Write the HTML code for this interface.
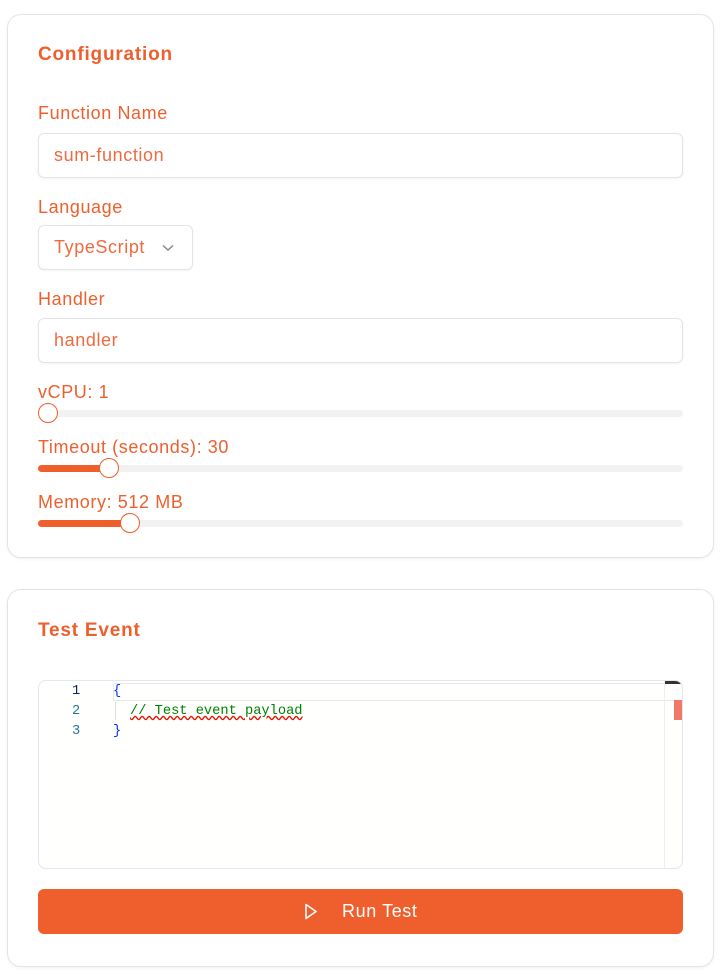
<!DOCTYPE html>
<html><head><style>
body{margin:0;background:#fff;font-family:"Liberation Sans",sans-serif;width:724px;height:976px;position:relative;overflow:hidden;color:#ee5f2d}
.card{position:absolute;left:7px;width:705px;border:1px solid #e3e4ea;border-radius:14px;background:#fff;box-shadow:0 1px 3px rgba(0,0,0,.06)}
.t{position:absolute;left:38px;font-size:18px;letter-spacing:.6px;color:#ee5f2d;white-space:nowrap}
.h{font-weight:bold;font-size:19px;letter-spacing:.8px}
.inp{position:absolute;left:38px;width:643px;height:43px;border:1px solid #e3e4ea;border-radius:6px;box-shadow:0 1px 2px rgba(0,0,0,.05)}
.inp span{position:absolute;left:15px;top:11px;font-size:18px;letter-spacing:.6px;color:#ee6a40}
.track{position:absolute;left:38px;width:645px;height:7px;border-radius:4px;background:#f2f2f2}
.fill{position:absolute;left:0;top:0;height:7px;border-radius:4px;background:#ee5f2d}
.knob{position:absolute;top:-7px;width:18px;height:18px;border:1.5px solid #ee5f2d;border-radius:50%;background:#fff}
.mono{font-family:"Liberation Mono",monospace;font-size:13.7px;position:absolute}
</style></head><body>
<div class="card" style="top:14px;height:542px"></div>
<div class="t h" style="top:44px">Configuration</div>
<div class="t" style="top:103px">Function Name</div>
<div class="inp" style="top:133px"><span>sum-function</span></div>
<div class="t" style="top:197px">Language</div>
<div class="inp" style="top:225px;width:153px"><span>TypeScript</span>
<svg style="position:absolute;left:123px;top:18px" width="12" height="8" viewBox="0 0 12 8"><path d="M1 1.5l5 4.5 5-4.5" fill="none" stroke="#888" stroke-width="1.5"/></svg></div>
<div class="t" style="top:289px">Handler</div>
<div class="inp" style="top:318px"><span>handler</span></div>
<div class="t" style="top:382px">vCPU: 1</div>
<div class="track" style="top:410px"><div class="knob" style="left:0"></div></div>
<div class="t" style="top:437px">Timeout (seconds): 30</div>
<div class="track" style="top:465px"><div class="fill" style="width:72px"></div><div class="knob" style="left:61px"></div></div>
<div class="t" style="top:492px">Memory: 512 MB</div>
<div class="track" style="top:520px"><div class="fill" style="width:92px"></div><div class="knob" style="left:82px"></div></div>

<div class="card" style="top:589px;height:376px"></div>
<div class="t h" style="top:620px">Test Event</div>
<div style="position:absolute;left:38px;top:680px;width:643px;height:187px;border:1px solid #e5e5ea;border-radius:8px;background:#fffffd;overflow:hidden">
<div style="position:absolute;left:74px;top:2px;width:560px;height:16px;border:1px solid #e8e8e8;border-right:none"></div>
<div style="position:absolute;left:625px;top:0;width:1px;height:187px;background:#eee"></div>
<div style="position:absolute;left:626px;top:0;width:16px;height:3px;background:#333"></div>
<div style="position:absolute;left:635px;top:19px;width:8px;height:20px;background:#f07868"></div>
<div style="position:absolute;left:76px;top:21px;width:1px;height:18px;background:#ddd"></div>
<div class="mono" style="left:33px;top:3px;color:#0b216f">1</div>
<div class="mono" style="left:33px;top:23px;color:#237893">2</div>
<div class="mono" style="left:33px;top:43px;color:#237893">3</div>
<div class="mono" style="left:74px;top:3px;color:#0431fa">{</div>
<div class="mono" style="left:91px;top:23px;color:#008000;text-decoration:underline wavy #e51400">// Test event payload</div>
<div class="mono" style="left:74px;top:43px;color:#0431fa">}</div>
</div>
<div style="position:absolute;left:38px;top:889px;width:645px;height:45px;border-radius:6px;background:#ee5f2d;color:#fff;font-size:18px;letter-spacing:.6px">
<svg style="position:absolute;left:266px;top:14px" width="14" height="17" viewBox="0 0 14 17"><path d="M2 1.5l10 7-10 7z" fill="none" stroke="#fff" stroke-width="1.6" stroke-linejoin="round"/></svg>
<span style="position:absolute;left:304px;top:12px">Run Test</span></div>
</body></html>
